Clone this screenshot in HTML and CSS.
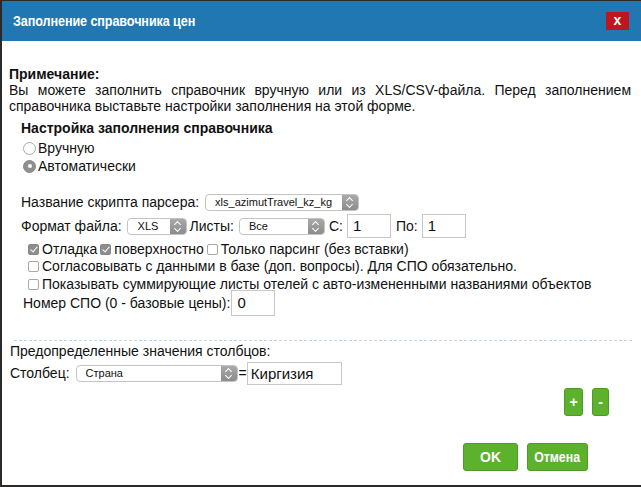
FILE: index.html
```html
<!DOCTYPE html>
<html lang="ru">
<head>
<meta charset="utf-8">
<title>Заполнение справочника цен</title>
<link rel="stylesheet" href="styles.css">
</head>
<body>
<div class="win">
  <div class="hdr">
    <span class="title">Заполнение справочника цен</span>
    <span class="close">x</span>
  </div>
  <div class="content">
    <div class="note-title">Примечание:</div>
    <p class="note">Вы можете заполнить справочник вручную или из XLS/CSV-файла. Перед заполнением справочника выставьте настройки заполнения на этой форме.</p>

    <div class="settings">
      <div class="sec-title">Настройка заполнения справочника</div>
      <div class="radios">
        <div class="radio-row"><span class="radio"></span>Вручную</div>
        <div class="radio-row"><span class="radio on"></span>Автоматически</div>
      </div>

      <div class="row r-script">Название скрипта парсера:<span class="sel w-script"><span class="val">xls_azimutTravel_kz_kg</span><span class="arr"></span></span></div>
      <div class="row r-format">Формат файла:<span class="sel w-xls"><span class="val">XLS</span><span class="arr"></span></span>Листы:<span class="sel w-list"><span class="val">Все</span><span class="arr"></span></span>С:<span class="inp w-num">1</span><span class="lbl-po">По:</span><span class="inp w-num">1</span></div>
      <div class="chk-row c1"><span class="chk on"></span>Отладка<span class="chk on"></span>поверхностно<span class="chk"></span>Только парсинг (без вставки)</div>
      <div class="chk-row c2"><span class="chk"></span>Согласовывать с данными в базе (доп. вопросы). Для СПО обязательно.</div>
      <div class="chk-row c3"><span class="chk"></span>Показывать суммирующие листы отелей с авто-измененными названиями объектов</div>
      <div class="row r-spo">Номер СПО (0 - базовые цены):<span class="inp w-spo">0</span></div>
    </div>

    <div class="sep"></div>

    <div class="predef-title">Предопределенные значения столбцов:</div>
    <div class="row r-col">Столбец:<span class="sel w-col"><span class="val">Страна</span><span class="arr"></span></span>=<span class="inp w-country">Киргизия</span></div>

    <div class="pm">
      <span class="btn small">+</span>
      <span class="btn small minus">-</span>
    </div>

    <div class="actions">
      <span class="btn big ok">OK</span>
      <span class="btn big cancel"><span class="cond">Отмена</span></span>
    </div>
  </div>
</div>
</body>
</html>
```

FILE: styles.css
```css
* { box-sizing: border-box; }
html, body { margin: 0; padding: 0; background: #fff; }
body {
  font-family: "Liberation Sans", Arial, Helvetica, sans-serif;
  font-size: 14px;
  color: #111;
}
.win {
  width: 641px;
  height: 487px;
  border-left: 2px solid #2c2a28;
  border-top: 1px solid #2c2a28;
  border-bottom: 2px solid #2c2a28;
  background: #fff;
  overflow: hidden;
}
.hdr {
  height: 40px;
  background: #2177b2;
  display: flex;
  align-items: center;
  justify-content: space-between;
  padding: 0 11px 0 11px;
}
.title {
  color: #fff;
  font-weight: bold;
  font-size: 14px;
  display: inline-block;
  transform: scaleX(0.9);
  transform-origin: left center;
  white-space: nowrap;
  letter-spacing: -0.1px;
}
.close {
  width: 23px;
  height: 18px;
  margin-top: -1px;
  background: #c0151e;
  color: #fff;
  font-weight: bold;
  font-size: 14px;
  line-height: 17px;
  text-align: center;
  margin-right: 1px;
}
.content {
  padding: 25px 10px 0 7px;
  height: 444px;
}
.note-title { font-weight: bold; line-height: 16px; }
.note {
  margin: 0;
  line-height: 16px;
  text-align: justify;
  width: 622px;
}
.settings { padding-left: 12px; }
.sec-title { font-weight: bold; line-height: 16px; margin-top: 6px; }
.radios { margin-top: 3px; padding-left: 2px; }
.radio-row { display: flex; align-items: center; height: 18px; }
.radio {
  width: 13px; height: 13px;
  border: 1px solid #a9a9a9;
  border-radius: 50%;
  background: #fff;
  margin-right: 2px;
  display: inline-block;
  position: relative;
}
.radio.on { background: #8f8f8f; border-color: #868686; }
.radio.on::after {
  content: "";
  position: absolute;
  left: 3.5px; top: 3.5px;
  width: 4px; height: 4px;
  border-radius: 50%;
  background: #fff;
}
.row { display: flex; align-items: center; white-space: nowrap; }
.r-script { margin-top: 16px; height: 22px; }
.r-format { height: 26px; }
.sel {
  display: inline-flex;
  align-items: stretch;
  height: 17px;
  border: 1px solid #c4c4c4;
  border-radius: 4px;
  background: #fff;
  margin: 0 3px 0 4px;
  overflow: hidden;
  flex-shrink: 0;
}
.sel .val {
  flex: 1;
  font-size: 11px;
  line-height: 15px;
  padding-left: 9px;
  color: #111;
}
.sel .arr {
  width: 16px;
  background: linear-gradient(#a9a9a9, #8c8c8c);
  position: relative;
}
.sel .arr::before, .sel .arr::after {
  content: "";
  position: absolute;
  left: 5px;
  width: 4px; height: 4px;
  border-left: 1.3px solid #fff;
  border-top: 1.3px solid #fff;
}
.sel .arr::before { top: 3.5px; transform: rotate(45deg); }
.sel .arr::after { top: 7px; transform: rotate(225deg); }
.w-script { width: 154px; margin-left: 6px; }
.w-xls { width: 60px; margin-left: 5px; }
.w-xls .val { padding-left: 10px; }
.w-list { width: 86px; margin-left: 5px; margin-right: 4px; }
.w-col { width: 162px; margin-left: 6px; margin-right: 1px; }
.inp {
  display: inline-block;
  height: 24px;
  border: 1px solid #c8c8c8;
  padding: 0 5px;
  line-height: 22px;
  font-size: 15px;
  background: #fff;
  flex-shrink: 0;
}
.w-num { width: 44px; margin-left: 4px; }
.lbl-po { margin-left: 5px; }
.w-spo { width: 44px; margin-left: 1px; height: 26px; line-height: 24px; }
.chk-row { display: flex; align-items: center; height: 18px; padding-left: 7px; white-space: nowrap; }
.c1 { margin-top: 1px; }
.c2 { margin-top: -1px; }
.c3 { margin-top: 0; }
.chk {
  width: 11px; height: 11px;
  border: 1px solid #a8a8a8;
  border-radius: 2px;
  background: #fff;
  margin-right: 3px;
  margin-left: 3px;
  display: inline-block;
  position: relative;
}
.chk-row > .chk:first-child { margin-left: 0; }
.chk.on { background: #8e8e8e; border-color: #888; }
.chk.on::after {
  content: "";
  position: absolute;
  left: 3px; top: 0.5px;
  width: 3px; height: 6px;
  border-right: 1.5px solid #fff;
  border-bottom: 1.5px solid #fff;
  transform: rotate(40deg);
}
.r-spo { height: 26px; margin-top: -3px; padding-left: 2px; }
.sep {
  margin: 24px 0 0 5px;
  width: 618px;
  border-top: 1px dashed #b9d7ee;
}
.predef-title { line-height: 16px; margin-top: 2px; padding-left: 1px; }
.r-col { height: 24px; margin-top: 2px; padding-left: 1px; }
.w-country { width: 95px; height: 23px; line-height: 21px; margin-left: 0; padding-left: 3px; }
.pm {
  display: flex;
  justify-content: flex-end;
  gap: 9px;
  margin-top: 3px;
  padding-right: 22px;
}
.btn {
  display: inline-flex;
  align-items: center;
  justify-content: center;
  background: #5db22d;
  border: 1px solid #4d9a24;
  border-radius: 3px;
  color: #fff;
  font-weight: bold;
}
.btn.small { width: 19px; height: 28px; font-size: 14px; }
.btn.small.minus { width: 17px; }
.actions {
  display: flex;
  justify-content: flex-end;
  gap: 9px;
  margin-top: 27px;
  padding-right: 43px;
}
.btn.big { height: 28px; font-size: 14px; }
.btn.ok { width: 55px; }
.btn.cancel { width: 61px; }
.cond {
  display: inline-block;
  transform: scaleX(0.88);
  white-space: nowrap;
}
```
